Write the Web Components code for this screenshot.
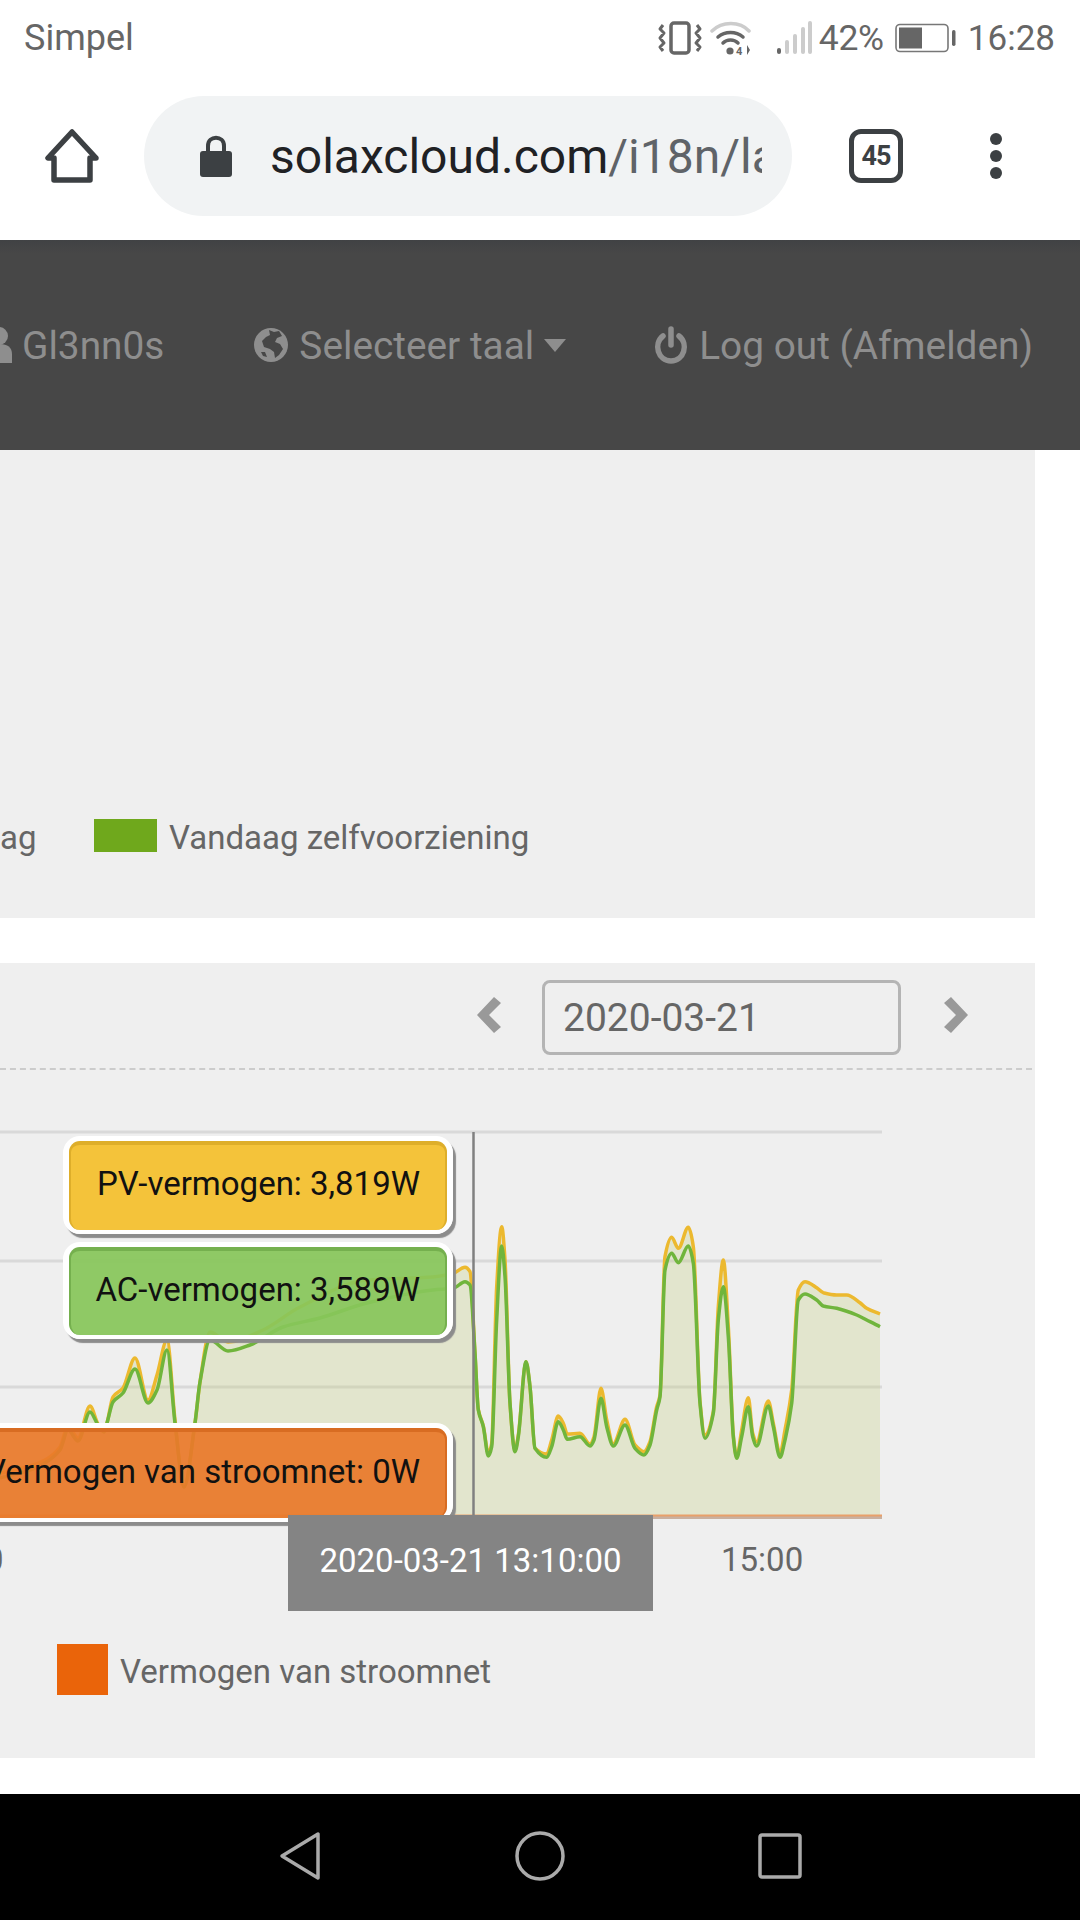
<!DOCTYPE html>
<html>
<head>
<meta charset="utf-8">
<title>SolaX Cloud</title>
<style>
html, body { margin: 0; padding: 0; background: #fff; }
body { width: 1080px; height: 1920px; overflow: hidden; font-family: Roboto, "Liberation Sans", sans-serif; display: flex; flex-direction: column; }
</style>
</head>
<body>
<phone-status></phone-status>
<browser-bar></browser-bar>
<top-nav></top-nav>
<grey-panel style="height:468px;margin-bottom:45px">
  <today-legend></today-legend>
</grey-panel>
<grey-panel style="height:795px">
  <date-picker value="2020-03-21"></date-picker>
  <power-chart></power-chart>
  <chart-legend>
    <legend-item color="#ea640a" w="51" h="51">Vermogen van stroomnet</legend-item>
  </chart-legend>
</grey-panel>
<android-nav></android-nav>

<script>
class PhoneStatus extends HTMLElement {
    constructor() {
        super()
        this.shadow = this.attachShadow({ mode: "open" })
    }
    connectedCallback() {
        this.shadow.innerHTML = `<style>
        :host { display: flex; align-items: center; height: 74px; padding: 2px 25px 0 24px; box-sizing: border-box; color: #666; font-size: 35px; flex: none; }
        .carrier { flex: 1; font-size: 36px; }
        svg { display: block; }
        .pct { margin: 0 11px 0 7px; font-size: 35.5px; letter-spacing: -.3px; }
        .time { margin-left: 12px; }
        .r { display: flex; align-items: center; }
        </style>
        <div class="carrier">Simpel</div>
        <div class="r">
            <svg width="44" height="36" viewBox="0 0 44 36" fill="none" stroke="#666" stroke-width="3" style="margin-right:8px">
                <rect x="13" y="3" width="18" height="30" rx="3" stroke-width="3.5"/>
                <path d="M5 5 L2 9 L6 13 L2 18 L6 23 L2 27 L5 31M39 5 L42 9 L38 13 L42 18 L38 23 L42 27 L39 31" stroke-linejoin="round"/>
            </svg>
            <svg width="42" height="36" viewBox="0 0 42 36" fill="none" stroke-linecap="round" style="margin-right:24px">
                <path d="M2 11 C12 1 30 1 39 11" stroke="#ccc" stroke-width="3.5"/>
                <path d="M8 17 C15 11 26 11 33 17" stroke="#666" stroke-width="3.5"/>
                <path d="M13 23 C17 19 24 19 28 23" stroke="#666" stroke-width="3.5"/>
                <circle cx="20" cy="31" r="3.6" fill="#666"/>
                <text x="26" y="35" font-size="11" font-weight="700" fill="#666" font-family="Roboto">4</text>
                <path d="M34 25 V35 M37 25 L40 30 H37 Z M37 30 H40 L37 35 Z" stroke="none" fill="#666"/>
            </svg>
            <svg width="36" height="36" viewBox="0 0 36 36">
                <rect x="1" y="28" width="4" height="6" rx="2" fill="#666"/>
                <rect x="9" y="20" width="4" height="14" rx="2" fill="#ccc"/>
                <rect x="17" y="14" width="4" height="20" rx="2" fill="#ccc"/>
                <rect x="25" y="7" width="4" height="27" rx="2" fill="#ccc"/>
                <rect x="32" y="1" width="4" height="33" rx="2" fill="#ccc"/>
            </svg>
            <span class="pct">42%</span>
            <svg width="61" height="30" viewBox="0 0 61 30">
                <rect x="1" y="1.5" width="52" height="27" rx="4" fill="none" stroke="#777" stroke-width="1.6"/>
                <rect x="4" y="4.5" width="23" height="21" fill="#666"/>
                <rect x="57" y="7" width="3.5" height="16" rx="1.7" fill="#666"/>
            </svg>
            <span class="time">16:28</span>
        </div>`
    }
}
customElements.define('phone-status', PhoneStatus)

class BrowserBar extends HTMLElement {
    constructor() {
        super()
        this.shadow = this.attachShadow({ mode: "open" })
    }
    connectedCallback() {
        this.shadow.innerHTML = `<style>
        :host { display: flex; align-items: center; height: 166px; flex: none; padding-left: 45px; box-sizing: border-box; padding-bottom: 2px; }
        svg { display: block; flex: none; }
        .pill { width: 648px; height: 120px; margin-left: 45px; background: #f1f3f4; border-radius: 60px; display: flex; align-items: center; padding-left: 56px; box-sizing: border-box; flex: none; }
        .url { margin-left: 38px; width: 492px; overflow: hidden; white-space: nowrap; font-size: 48px; color: #202124; }
        .url span { color: #5f6368; }
        .tabs { margin-left: 57px; width: 54px; height: 54px; box-sizing: border-box; border: 5px solid #3c4043; border-radius: 12px; display: flex; align-items: center; justify-content: center; font-size: 27px; font-weight: 700; color: #3c4043; letter-spacing: -1px; flex: none; }
        .dots { margin-left: 87px; display: flex; flex-direction: column; gap: 5px; }
        .dots i { width: 12px; height: 12px; border-radius: 50%; background: #3c4043; display: block; }
        </style>
        <svg width="54" height="54" viewBox="0 0 54 54" fill="none" stroke="#3c4043" stroke-width="5.5" stroke-linejoin="round">
            <path d="M27 3 L3 29 H9 V51 H45 V29 H51 Z"/>
        </svg>
        <div class="pill">
            <svg width="32" height="42" viewBox="0 0 32 42">
                <path d="M8 18 V11 C8 0 24 0 24 11 V18" fill="none" stroke="#3c4043" stroke-width="4"/>
                <rect x="0" y="16" width="32" height="26" rx="3" fill="#3c4043"/>
            </svg>
            <div class="url">solaxcloud.com<span>/i18n/la</span></div>
        </div>
        <div class="tabs">45</div>
        <div class="dots"><i></i><i></i><i></i></div>`
    }
}
customElements.define('browser-bar', BrowserBar)

class TopNav extends HTMLElement {
    constructor() {
        super()
        this.shadow = this.attachShadow({ mode: "open" })
    }
    connectedCallback() {
        this.shadow.innerHTML = `<style>
        :host { display: flex; align-items: center; height: 210px; flex: none; background: linear-gradient(#404244, #474747 14px); color: #8e8e8e; font-size: 38.8px; box-sizing: border-box; white-space: nowrap; }
        svg { display: block; flex: none; }
        .item { display: flex; align-items: center; }
        .user { margin-left: -11px; }
        .user svg { margin-right: 10px; }
        .lang { margin-left: 90px; }
        .lang svg { margin-right: 11px; }
        .caret { margin-left: 10px; width: 0; height: 0; border: 11px solid transparent; border-top: 13px solid #8e8e8e; border-bottom: 0; }
        .out { margin-left: 88px; }
        .out svg { margin-right: 11px; }
        </style>
        <div class="item user">
            <svg width="23" height="36" viewBox="0 0 23 36" fill="#8e8e8e">
                <circle cx="10" cy="9" r="9"/>
                <path d="M-4 36 V26 C-4 19 2 17 10 17 C18 17 23 20 23 27 V36 Z"/>
            </svg>
            <span>Gl3nn0s</span>
        </div>
        <div class="item lang">
            <svg width="34" height="34" viewBox="0 0 34 34">
                <circle cx="17" cy="17" r="17" fill="#8e8e8e"/>
                <path d="M15 2 L20 4 L25 3 L28 8 L23 10 L21 14 L26 16 L29 21 L25 27 L21 30 L20 24 L16 21 L10 19 L8 13 L12 9 L16 7 Z" fill="#474747"/>
                <path d="M7 24 L11 24 L13 29 L9 28 Z" fill="#474747"/>
            </svg>
            <span>Selecteer taal</span>
            <div class="caret"></div>
        </div>
        <div class="item out">
            <svg width="34" height="38" viewBox="0 0 34 38" fill="none" stroke="#8e8e8e" stroke-width="5.5" stroke-linecap="round">
                <path d="M9 10 C-1 18 4 35 17 35 C30 35 35 18 25 10"/>
                <path d="M17 3 V19"/>
            </svg>
            <span>Log out (Afmelden)</span>
        </div>`
    }
}
customElements.define('top-nav', TopNav)

class GreyPanel extends HTMLElement {
    constructor() {
        super()
        this.shadow = this.attachShadow({ mode: "open" })
    }
    connectedCallback() {
        this.shadow.innerHTML = `<style>
        :host { display: flex; flex-direction: column; width: 1035px; background: #efefef; flex: none; }
        </style><slot></slot>`
    }
}
customElements.define('grey-panel', GreyPanel)

class LegendItem extends HTMLElement {
    constructor() {
        super()
        this.shadow = this.attachShadow({ mode: "open" })
    }
    connectedCallback() {
        const w = this.getAttribute('w') || 63
        const h = this.getAttribute('h') || 33
        this.shadow.innerHTML = `<style>
        :host { display: flex; align-items: center; font-size: 33px; color: #666; white-space: nowrap; }
        .sw { width: ${w}px; height: ${h}px; background: ${this.getAttribute('color')}; margin-right: 12px; flex: none; }
        .t { padding-top: 4px; }
        </style><div class="sw"></div><span class="t"><slot></slot></span>`
    }
}
customElements.define('legend-item', LegendItem)

class TodayLegend extends HTMLElement {
    constructor() {
        super()
        this.shadow = this.attachShadow({ mode: "open" })
    }
    connectedCallback() {
        this.shadow.innerHTML = `<style>
        :host { display: flex; align-items: center; margin-top: 369px; height: 33px; font-size: 33px; color: #666; white-space: nowrap; }
        .cut { width: 94px; flex: none; padding-top: 4px; }
        </style>
        <div class="cut">ag</div>
        <legend-item color="#6fa81c">Vandaag zelfvoorziening</legend-item>`
    }
}
customElements.define('today-legend', TodayLegend)

class DatePicker extends HTMLElement {
    constructor() {
        super()
        this.shadow = this.attachShadow({ mode: "open" })
    }
    connectedCallback() {
        this.shadow.innerHTML = `<style>
        :host { display: flex; align-items: center; justify-content: flex-end; height: 107px; padding: 4px 64px 0 0; border-bottom: 2px dashed #ccc; margin-right: 3px; flex: none; box-sizing: border-box; }
        svg { display: block; flex: none; margin-bottom: 5px; }
        .box { width: 359px; height: 75px; margin: 0 43px 0 41px; box-sizing: border-box; border: 3px solid #b4b4b4; border-radius: 8px; font-size: 39px; color: #666; display: flex; align-items: center; padding-left: 18px; }
        </style>
        <svg width="24" height="36" viewBox="0 0 24 36" fill="#999"><path d="M17 0 L24 6 L12 18 L24 30 L17 36 L0 18 Z"/></svg>
        <div class="box">${this.getAttribute('value')}</div>
        <svg width="24" height="36" viewBox="0 0 24 36" fill="#999"><path d="M7 0 L0 6 L12 18 L0 30 L7 36 L24 18 Z"/></svg>`
    }
}
customElements.define('date-picker', DatePicker)

class ChartTip extends HTMLElement {
    constructor() {
        super()
        this.shadow = this.attachShadow({ mode: "open" })
    }
    connectedCallback() {
        const c = this.getAttribute('color')
        const d = this.getAttribute('edge')
        this.shadow.innerHTML = `<style>
        :host { position: absolute; display: block; box-sizing: border-box; border: solid #fff; border-width: 5px 6px 4px; border-radius: 17px; box-shadow: 3px 4px 1px #8c8c8c; }
        .in { height: 100%; box-sizing: border-box; border-radius: 11px; border: 2px solid ${d}; border-top-width: 4px; border-bottom: 0; background: ${c}; color: #111; font-size: 33px; display: flex; align-items: center; justify-content: flex-end; padding: 0 25px 8px 0; white-space: nowrap; overflow: hidden; }
        </style><div class="in"><slot></slot></div>`
    }
}
customElements.define('chart-tip', ChartTip)

class PowerChart extends HTMLElement {
    constructor() {
        super()
        this.shadow = this.attachShadow({ mode: "open" })
    }
    // monotone kromme: ronde toppen, geen doorschieten
    smooth(pts) {
        const n = pts.length
        const s = []
        for (let i = 0; i < n - 1; i++) s.push((pts[i + 1][1] - pts[i][1]) / (pts[i + 1][0] - pts[i][0]))
        const m = [s[0]]
        for (let i = 1; i < n - 1; i++) {
            m.push(s[i - 1] * s[i] <= 0 ? 0 : 2 * s[i - 1] * s[i] / (s[i - 1] + s[i]))
        }
        m.push(s[n - 2])
        let d = `M${pts[0][0]} ${pts[0][1]}`
        for (let i = 0; i < n - 1; i++) {
            const h = (pts[i + 1][0] - pts[i][0]) / 3
            d += ` C${(pts[i][0] + h).toFixed(1)} ${(pts[i][1] + m[i] * h).toFixed(1)} ${(pts[i + 1][0] - h).toFixed(1)} ${(pts[i + 1][1] - m[i + 1] * h).toFixed(1)} ${pts[i + 1][0].toFixed(1)} ${pts[i + 1][1].toFixed(1)}`
        }
        return d
    }
    connectedCallback() {
        // rechterdeel: afgelezen op schaal 3x vanaf (440,1120)
        const z = a => a.map(p => [440 + p[0] / 3, 1120 + p[1] / 3])
        const greenLeft = [[0,1478],[30,1470],[45,1463],[60,1450],[68,1430],[78,1441],[90,1412],[98,1425],[104,1432],[107,1423],[113,1402],[123,1393],[135,1369],[148,1403],[157,1390],[167,1350],[175,1423],[184,1487],[195,1423],[200,1382],[210,1340],[228,1351],[250,1345],[283,1327],[320,1318],[367,1303],[433,1290]]
        const yellowLeft = [[0,1473],[30,1466],[45,1460],[60,1447],[68,1426],[78,1438],[90,1406],[98,1424],[104,1431],[107,1423],[113,1397],[123,1388],[135,1358],[148,1400],[157,1375],[167,1340],[175,1420],[184,1487],[195,1423],[200,1382],[210,1332],[228,1342],[263,1330],[300,1307],[367,1280],[433,1277]]
        const green = greenLeft.concat(z([[40,505],[75,485],[90,495],[105,700],[115,870],[130,920],[145,1008],[155,980],[170,600],[185,378],[195,470],[210,850],[225,995],[235,950],[258,725],[270,800],[285,985],[320,1012],[335,980],[355,905],[370,930],[382,958],[420,950],[450,978],[462,960],[483,835],[500,920],[520,978],[555,915],[585,985],[612,1005],[630,975],[650,870],[660,830],[675,450],[695,400],[715,428],[745,378],[760,430],[780,850],[795,955],[820,880],[835,600],[850,500],[865,650],[880,950],[890,1015],[905,950],[925,860],[938,950],[950,978],[985,858],[1000,920],[1020,1012],[1035,960],[1055,850],[1075,540],[1095,522],[1130,540],[1150,558],[1190,565],[1250,585],[1280,600],[1320,620]]))
        const yellow = yellowLeft.concat(z([[40,460],[75,442],[90,455],[105,700],[115,868],[130,918],[145,1000],[155,970],[170,500],[185,320],[195,420],[210,850],[225,990],[235,945],[258,725],[270,800],[285,985],[320,1002],[335,960],[355,888],[370,910],[382,942],[420,940],[450,972],[462,950],[483,805],[500,900],[520,972],[555,898],[585,975],[612,995],[630,965],[650,860],[660,825],[675,410],[695,352],[715,385],[745,322],[760,380],[780,845],[795,945],[820,875],[835,560],[850,420],[865,620],[880,945],[890,1012],[905,930],[925,833],[938,940],[950,965],[985,843],[1000,910],[1020,1000],[1035,930],[1055,810],[1075,510],[1095,485],[1130,503],[1150,518],[1190,525],[1220,525],[1260,548],[1280,565],[1320,582]]))
        const line = this.smooth(yellow)
        const greenLine = this.smooth(green)
        this.shadow.innerHTML = `<style>
        :host { display: block; position: relative; height: 554px; flex: none; }
        svg { position: absolute; left: 0; top: 0; display: block; }
        .stamp { position: absolute; left: 288px; top: 445px; width: 365px; height: 96px; background: #848484; color: #fff; font-size: 33px; display: flex; align-items: center; justify-content: center; white-space: nowrap; padding-bottom: 6px; box-sizing: border-box; }
        .tick { position: absolute; top: 471px; font-size: 33px; color: #666; line-height: 38px; }
        </style>
        <svg width="1035" height="554" viewBox="0 1070 1035 554">
            <g stroke="#d9d9d9" stroke-width="3">
                <path d="M0 1132 H882M0 1261 H882M0 1387 H882"/>
            </g>
            <path d="${line} L880 1515 L0 1515 Z" fill="rgba(190,200,110,.26)"/>
            <path d="M0 1517.5 H882" stroke="#c9b0a0" stroke-width="3"/>
            <path d="M0 1515.5 H882" stroke="#e8a06a" stroke-width="2"/>
            <path d="${line}" fill="none" stroke="#ecb92f" stroke-width="3.5"/>
            <path d="${greenLine}" fill="none" stroke="#70b53c" stroke-width="3.5"/>
            <path d="M473.5 1132 V1516" stroke="#808080" stroke-width="2.5"/>
        </svg>
        <chart-tip color="rgba(244,192,44,.93)" edge="#deae2a" style="left:63px;top:66px;width:390px;height:98px">PV-vermogen: 3,819W</chart-tip>
        <chart-tip color="rgba(136,198,90,.93)" edge="#75b04e" style="left:63px;top:172px;width:390px;height:97px">AC-vermogen: 3,589W</chart-tip>
        <chart-tip color="rgba(234,122,42,.93)" edge="#d86c22" style="left:-90px;top:353px;width:543px;height:99px">Vermogen van stroomnet: 0W</chart-tip>
        <div class="tick" style="left:-15px">0</div>
        <div class="stamp">2020-03-21 13:10:00</div>
        <div class="tick" style="left:721px">15:00</div>`
    }
}
customElements.define('power-chart', PowerChart)

class ChartLegend extends HTMLElement {
    constructor() {
        super()
        this.shadow = this.attachShadow({ mode: "open" })
    }
    connectedCallback() {
        this.shadow.innerHTML = `<style>
        :host { display: flex; align-items: center; padding-left: 57px; height: 51px; margin-top: 20px; flex: none; }
        </style><slot></slot>`
    }
}
customElements.define('chart-legend', ChartLegend)

class AndroidNav extends HTMLElement {
    constructor() {
        super()
        this.shadow = this.attachShadow({ mode: "open" })
    }
    connectedCallback() {
        this.shadow.innerHTML = `<style>
        :host { display: flex; align-items: center; height: 126px; margin-top: 36px; background: #000; flex: none; padding-left: 279px; box-sizing: border-box; padding-bottom: 2px; }
        svg { display: block; flex: none; }
        </style>
        <svg width="42" height="50" viewBox="0 0 42 50" fill="none" stroke="#aaa" stroke-width="3.5" stroke-linejoin="round"><path d="M39 3 V47 L3 25 Z" stroke-linejoin="round"/></svg>
        <svg width="50" height="50" viewBox="0 0 50 50" fill="none" stroke="#aaa" stroke-width="3.5" style="margin-left:194px"><circle cx="25" cy="25" r="23"/></svg>
        <svg width="44" height="46" viewBox="0 0 44 46" fill="none" stroke="#aaa" stroke-width="3.5" style="margin-left:193px"><rect x="2" y="2" width="40" height="42" rx="2"/></svg>`
    }
}
customElements.define('android-nav', AndroidNav)
</script>
</body>
</html>
